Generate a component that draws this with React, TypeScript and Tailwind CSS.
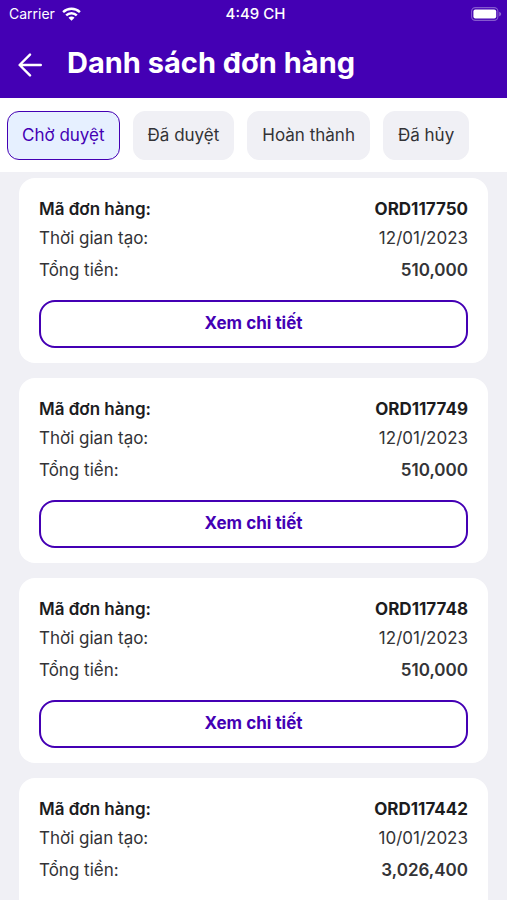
import React, { useState } from 'react';

type OrderStatus = 'pending' | 'approved' | 'completed' | 'cancelled';

interface Order {
    code: string;
    createdAt: string;
    total: number;
    status: OrderStatus;
}

const tabs: { key: OrderStatus; label: string }[] = [
    { key: 'pending', label: 'Chờ duyệt' },
    { key: 'approved', label: 'Đã duyệt' },
    { key: 'completed', label: 'Hoàn thành' },
    { key: 'cancelled', label: 'Đã hủy' },
];

const orders: Order[] = [
    { code: 'ORD117750', createdAt: '12/01/2023', total: 510000, status: 'pending' },
    { code: 'ORD117749', createdAt: '12/01/2023', total: 510000, status: 'pending' },
    { code: 'ORD117748', createdAt: '12/01/2023', total: 510000, status: 'pending' },
    { code: 'ORD117442', createdAt: '10/01/2023', total: 3026400, status: 'pending' },
];

const WifiIcon = () => (
    <svg width="19" height="14" viewBox="0 0 19 14" fill="none" stroke="currentColor" strokeWidth="2.4" aria-hidden="true">
        <path d="M1.1 5.2a12 12 0 0 1 16.8 0" />
        <path d="M4.2 8.4a7.5 7.5 0 0 1 10.6 0" />
        <path d="M9.5 13.8 6.5 10.8a4.2 4.2 0 0 1 6 0Z" fill="currentColor" stroke="none" />
    </svg>
);

const BatteryIcon = () => (
    <svg width="31" height="14" viewBox="0 0 31 14" fill="none" aria-hidden="true">
        <rect x="0.6" y="0.6" width="26.3" height="12.8" rx="3.8" stroke="#fff" strokeOpacity="0.35" strokeWidth="1.1" />
        <rect x="2.4" y="2.4" width="22.8" height="9.2" rx="2" fill="#fff" />
        <path d="M28.2 4.7c1.2.4 1.9 1.3 1.9 2.3s-.7 1.9-1.9 2.3Z" fill="#fff" fillOpacity="0.4" />
    </svg>
);

const BackIcon = () => (
    <svg width="24" height="24" viewBox="0 0 24 24" fill="none" stroke="currentColor" strokeWidth="2.4" strokeLinecap="round" strokeLinejoin="round" aria-hidden="true">
        <path d="M22.8 12H1.8M12 1.6 1.6 12 12 22.4" />
    </svg>
);

const StatusBar = () => (
    <div className="grid grid-cols-3 items-center h-7 pl-[9px] pr-[5px] text-sm">
        <div className="flex items-center gap-[7px]">
            <span>Carrier</span>
            <WifiIcon />
        </div>
        <span className="text-center text-[15px] font-medium">4:49 CH</span>
        <div className="flex justify-end">
            <BatteryIcon />
        </div>
    </div>
);

const OrderCard: React.FC<{ order: Order }> = ({ order }) => (
    <li className="bg-white rounded-2xl px-5 pt-[19px] pb-[15px]">
        <dl className="text-[17px] leading-6">
            <div className="flex justify-between font-semibold text-[#1c1c1e]">
                <dt>Mã đơn hàng:</dt>
                <dd className="font-bold">{order.code}</dd>
            </div>
            <div className="flex justify-between mt-[5px]">
                <dt>Thời gian tạo:</dt>
                <dd>{order.createdAt}</dd>
            </div>
            <div className="flex justify-between mt-2">
                <dt>Tổng tiền:</dt>
                <dd className="font-semibold">{order.total.toLocaleString('en-US')}</dd>
            </div>
        </dl>
        <button
            type="button"
            className="mt-[18px] h-12 w-full rounded-2xl border-2 border-[#4400b4] text-[17px] font-bold text-[#4400b4]"
        >
            Xem chi tiết
        </button>
    </li>
);

const App: React.FC = () => {
    const [selected, setSelected] = useState<OrderStatus>('pending');

    const filteredOrders = orders.filter((order) => order.status === selected);

    return (
        <div className="flex flex-col h-screen bg-[#f0f0f5] text-[#333336] font-[Inter,sans-serif]">
            <header className="shrink-0 bg-[#4400b4] text-white">
                <StatusBar />
                <div className="flex items-center gap-[25px] h-[70px] px-[18px]">
                    <button type="button" aria-label="Quay lại" className="pt-[3px]">
                        <BackIcon />
                    </button>
                    <h1 className="text-[29px] leading-9 font-bold">Danh sách đơn hàng</h1>
                </div>
            </header>

            <nav className="flex shrink-0 gap-[13px] bg-white px-[7px] pt-[13px] pb-3">
                {tabs.map((tab) => (
                    <button
                        key={tab.key}
                        type="button"
                        aria-pressed={selected === tab.key}
                        onClick={() => setSelected(tab.key)}
                        className={`h-[49px] rounded-xl border px-[14px] text-[17px] ${selected === tab.key
                            ? 'border-[#4400b4] bg-[#e6f0ff] text-[#4400b4]'
                            : 'border-[#f0f0f5] bg-[#f0f0f5]'
                            }`}
                    >
                        {tab.label}
                    </button>
                ))}
            </nav>

            <ul className="flex flex-col flex-1 gap-[15px] overflow-y-auto px-[19px] pt-1.5 [scrollbar-width:none]">
                {filteredOrders.map((order) => (
                    <OrderCard key={order.code} order={order} />
                ))}
            </ul>
        </div>
    );
};

export default App;
